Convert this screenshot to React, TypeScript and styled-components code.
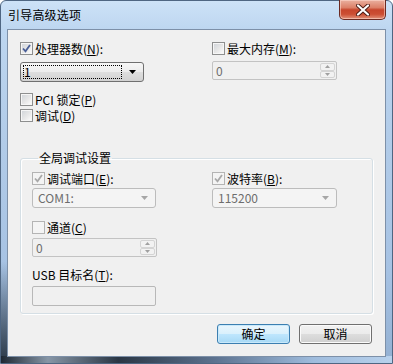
import React from 'react';
import styled, { createGlobalStyle } from 'styled-components';

const Global = createGlobalStyle`
  html, body { margin: 0; padding: 0; background: #ffffff; }
  body {
    font-family: "Noto Sans CJK SC", "Noto Sans", sans-serif;
    font-size: 12px;
    color: #000;
  }
  * { box-sizing: border-box; }
`;

const Window = styled.div`
  width: 393px;
  height: 364px;
  display: flex;
  flex-direction: column;
  border: 1px solid #4f6682;
  border-radius: 6px 6px 0 0;
  padding: 0 6px 6px 6px;
  background:
    linear-gradient(90deg, #1e2833 0%, #8796a6 12%, #2a3644 30%, #5d7390 55%, #9fbcdd 80%, #b8d1ec 100%) bottom / 100% 7px no-repeat,
    linear-gradient(180deg, rgba(40, 52, 66, 0) 72%, #2b3846 100%) left / 7px 100% no-repeat,
    linear-gradient(180deg, #cde2f7 0%, #bdd6f0 8%, #b1cbe8 40%, #a6c2e3 75%, #93b0d2 100%);
`;

const TitleBar = styled.div`
  height: 28px;
  display: flex;
  justify-content: space-between;
  align-items: center;
  padding-left: 1px;
`;

const TitleText = styled.span`
  font-size: 12px;
  line-height: 14px;
  color: #000;
  letter-spacing: 0.2px;
`;

const CloseButton = styled.div`
  align-self: flex-start;
  width: 47px;
  height: 20px;
  margin-top: -1px;
  margin-right: 0;
  border: 1px solid #6b2a22;
  border-top: none;
  border-radius: 0 0 5px 5px;
  background: linear-gradient(180deg, #eab0a0 0%, #dc8068 40%, #c7452c 52%, #cc4f34 75%, #e2927a 100%);
  box-shadow: inset 0 0 0 1px rgba(255, 220, 210, 0.55);
  display: flex;
  align-items: center;
  justify-content: center;
`;

const Client = styled.div`
  flex: 1;
  border: 1px solid #7d90a8;
  background: #f0f0f0;
  display: flex;
  flex-direction: column;
  padding: 12px 12px 0 12px;
`;

const TopGrid = styled.div`
  display: grid;
  grid-template-columns: 192px 1fr;
`;

const Col = styled.div`
  display: flex;
  flex-direction: column;
  align-items: flex-start;
`;

const CheckRow = styled.label<{ $mt?: number }>`
  display: flex;
  align-items: center;
  gap: 2px;
  height: 13px;
  margin-top: ${p => p.$mt ?? 0}px;
  line-height: 13px;
  white-space: nowrap;
`;

const Box = styled.span<{ $disabled?: boolean }>`
  width: 13px;
  height: 13px;
  flex: none;
  border: 1px solid ${p => (p.$disabled ? '#b4b4b4' : '#8e8f8f')};
  background: ${p =>
    p.$disabled
      ? '#f4f4f4'
      : 'linear-gradient(135deg, #cfd3d8 0%, #e8e8e8 55%, #ffffff 100%)'};
  box-shadow: inset 0 0 0 1px ${p => (p.$disabled ? '#f4f4f4' : '#f6f6f6')};
  display: flex;
  align-items: center;
  justify-content: center;
`;

const Mn = styled.span`
  text-decoration: underline;
  text-underline-offset: 1px;
`;

const Combo = styled.div<{ $disabled?: boolean; $w: number; $mt?: number }>`
  width: ${p => p.$w}px;
  height: 20px;
  margin-top: ${p => p.$mt ?? 0}px;
  border: 1px solid ${p => (p.$disabled ? '#bcbcbc' : '#707070')};
  border-radius: 3px;
  background: ${p =>
    p.$disabled
      ? '#f4f4f4'
      : 'linear-gradient(180deg, #f7f7f7 0%, #ececec 50%, #dedede 52%, #d2d2d2 100%)'};
  color: ${p => (p.$disabled ? '#6d6d6d' : '#000')};
  display: flex;
  align-items: center;
  padding: 0 7px 0 2px;
  gap: 7px;
`;

const ComboText = styled.span<{ $focus?: boolean }>`
  flex: 1;
  height: 14px;
  line-height: 12px;
  padding-left: ${p => (p.$focus ? 0 : 2)}px;
  border: 1px dotted ${p => (p.$focus ? '#000' : 'transparent')};
`;

const Spin = styled.div<{ $mt?: number }>`
  width: 125px;
  height: 19px;
  margin-top: ${p => p.$mt ?? 0}px;
  border: 1px solid #c3c3c3;
  border-radius: 2px;
  background: #f0f0f0;
  display: flex;
  align-items: stretch;
`;

const SpinValue = styled.span`
  flex: 1;
  padding-left: 3px;
  line-height: 17px;
  color: #6d6d6d;
`;

const SpinButtons = styled.div`
  width: 16px;
  display: flex;
  flex-direction: column;
  padding: 1px 1px 1px 0;
  gap: 0;
`;

const SpinHalf = styled.div`
  flex: 1;
  border: 1px solid #d4d4d4;
  border-radius: 2px;
  background: #f2f2f2;
  display: flex;
  align-items: center;
  justify-content: center;
`;

const Group = styled.fieldset`
  margin: 29px 0 0 0;
  padding: 7px 11px 7px 11px;
  border: 1px solid #d5dfe5;
  border-radius: 3px;
  box-shadow: inset 1px 1px 0 #ffffff, 1px 1px 0 #ffffff;
  min-inline-size: 0;
`;

const Legend = styled.legend`
  margin-left: 6px;
  padding: 0 1px;
  font-size: 12px;
  line-height: 14px;
`;

const GroupGrid = styled.div`
  display: grid;
  grid-template-columns: 180px 1fr;
`;

const PlainLabel = styled.div<{ $mt?: number }>`
  height: 14px;
  line-height: 14px;
  margin-top: ${p => p.$mt ?? 0}px;
  white-space: nowrap;
`;

const TextInput = styled.div<{ $mt?: number }>`
  width: 124px;
  height: 20px;
  margin-top: ${p => p.$mt ?? 0}px;
  border: 1px solid #b8b8b8;
  border-radius: 2px;
  background: #f0f0f0;
`;

const ButtonRow = styled.div`
  display: flex;
  justify-content: flex-end;
  gap: 9px;
  margin-top: 10px;
  padding-right: 1px;
`;

const Button = styled.div<{ $default?: boolean }>`
  width: 73px;
  height: 20px;
  border: 1px solid ${p => (p.$default ? '#3c7fb1' : '#707070')};
  border-radius: 3px;
  background: ${p =>
    p.$default
      ? 'linear-gradient(180deg, #eaf6fd 0%, #d9f0fc 50%, #bee6fd 52%, #a7d9f5 100%)'
      : 'linear-gradient(180deg, #f2f2f2 0%, #ebebeb 50%, #dddddd 52%, #cfcfcf 100%)'};
  box-shadow: inset 0 0 0 1px ${p => (p.$default ? '#c9e9fb' : '#fbfbfb')};
  display: flex;
  align-items: center;
  justify-content: center;
  line-height: 14px;
`;

const Check: React.FC<{ disabled?: boolean }> = ({ disabled }) => (
  <svg width="9" height="9" viewBox="0 0 9 9">
    <path
      d="M1 4.5 L3.5 7.3 L8 1"
      fill="none"
      stroke={disabled ? '#a8a8a8' : '#4a5f97'}
      strokeWidth="1.8"
    />
  </svg>
);

const Checkbox: React.FC<{ checked?: boolean; disabled?: boolean }> = ({ checked, disabled }) => (
  <Box $disabled={disabled}>{checked && <Check disabled={disabled} />}</Box>
);

const Arrow: React.FC<{ color: string }> = ({ color }) => (
  <svg width="7" height="4" viewBox="0 0 7 4">
    <path d="M0 0 H7 L3.5 4 Z" fill={color} />
  </svg>
);

const SmallArrow: React.FC<{ up?: boolean }> = ({ up }) => (
  <svg width="5" height="3" viewBox="0 0 5 3">
    <path d={up ? 'M0 3 H5 L2.5 0 Z' : 'M0 0 H5 L2.5 3 Z'} fill="#a0a0a0" />
  </svg>
);

const SpinBox: React.FC<{ value: string; mt?: number }> = ({ value, mt }) => (
  <Spin $mt={mt}>
    <SpinValue>{value}</SpinValue>
    <SpinButtons>
      <SpinHalf>
        <SmallArrow up />
      </SpinHalf>
      <SpinHalf>
        <SmallArrow />
      </SpinHalf>
    </SpinButtons>
  </Spin>
);

export default function App() {
  return (
    <>
      <Global />
      <Window>
        <TitleBar>
          <TitleText>引导高级选项</TitleText>
          <CloseButton>
            <svg width="14" height="12" viewBox="0 0 14 12">
              <path d="M2 1.5 L12 10.5 M12 1.5 L2 10.5" stroke="#4a1a14" strokeWidth="4" strokeLinecap="round" />
              <path d="M2 1.5 L12 10.5 M12 1.5 L2 10.5" stroke="#ffffff" strokeWidth="2.2" strokeLinecap="round" />
            </svg>
          </CloseButton>
        </TitleBar>
        <Client>
          <TopGrid>
            <Col>
              <CheckRow>
                <Checkbox checked />
                <span>
                  处理器数(<Mn>N</Mn>):
                </span>
              </CheckRow>
              <Combo $w={124} $mt={7}>
                <ComboText $focus>1</ComboText>
                <Arrow color="#000" />
              </Combo>
              <CheckRow $mt={11}>
                <Checkbox />
                <span>
                  PCI 锁定(<Mn>P</Mn>)
                </span>
              </CheckRow>
              <CheckRow $mt={3}>
                <Checkbox />
                <span>
                  调试(<Mn>D</Mn>)
                </span>
              </CheckRow>
            </Col>
            <Col>
              <CheckRow>
                <Checkbox />
                <span>
                  最大内存(<Mn>M</Mn>):
                </span>
              </CheckRow>
              <SpinBox value="0" mt={6} />
            </Col>
          </TopGrid>

          <Group>
            <Legend>全局调试设置</Legend>
            <GroupGrid>
              <Col>
                <CheckRow>
                  <Checkbox checked disabled />
                  <span>
                    调试端口(<Mn>E</Mn>):
                  </span>
                </CheckRow>
                <Combo $w={124} $mt={3} $disabled>
                  <ComboText>COM1:</ComboText>
                  <Arrow color="#a6a6a6" />
                </Combo>
                <CheckRow $mt={13}>
                  <Checkbox disabled />
                  <span>
                    通道(<Mn>C</Mn>)
                  </span>
                </CheckRow>
                <SpinBox value="0" mt={4} />
                <PlainLabel $mt={11}>
                  USB 目标名(<Mn>T</Mn>):
                </PlainLabel>
                <TextInput $mt={4} />
              </Col>
              <Col>
                <CheckRow>
                  <Checkbox checked disabled />
                  <span>
                    波特率(<Mn>B</Mn>):
                  </span>
                </CheckRow>
                <Combo $w={125} $mt={3} $disabled>
                  <ComboText>115200</ComboText>
                  <Arrow color="#a6a6a6" />
                </Combo>
              </Col>
            </GroupGrid>
          </Group>

          <ButtonRow>
            <Button $default>确定</Button>
            <Button>取消</Button>
          </ButtonRow>
        </Client>
      </Window>
    </>
  );
}
